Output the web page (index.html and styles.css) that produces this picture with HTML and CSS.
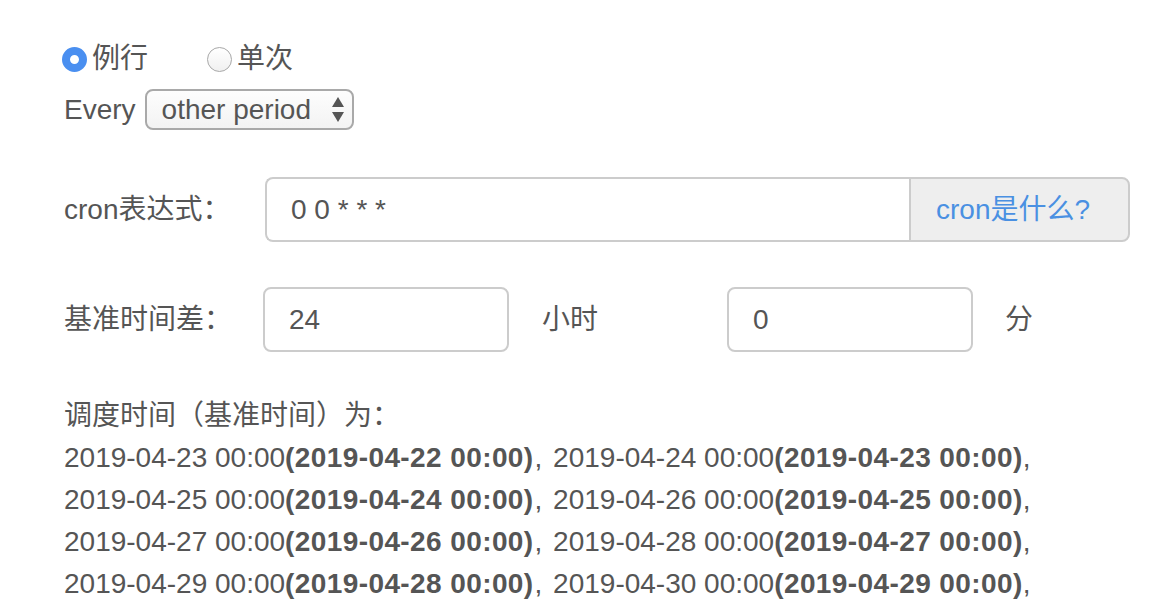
FILE: index.html
```html
<!DOCTYPE html>
<html lang="zh-CN">
<head>
    <meta charset="UTF-8">
    <title>调度配置</title>
    <link rel="stylesheet" href="styles.css">
</head>
<body>
    <div class="page">
        <div class="radio-row">
            <label class="radio-item">
                <input type="radio" name="mode" checked>
                <span>例行</span>
            </label>
            <label class="radio-item">
                <input type="radio" name="mode">
                <span>单次</span>
            </label>
        </div>

        <div class="every-row">
            <span>Every</span>
            <div class="select-wrap">
                <select>
                    <option>other period</option>
                    <option>day</option>
                    <option>hour</option>
                </select>
                <svg class="select-arrows" width="12" height="26" viewBox="0 0 12 26">
                    <path d="M6 0 L12 10 L0 10 Z" fill="#555"/>
                    <path d="M0 15 L12 15 L6 25 Z" fill="#555"/>
                </svg>
            </div>
        </div>

        <div class="form-row cron-row">
            <label class="field-label">cron表达式：</label>
            <div class="input-group">
                <input type="text" class="text-input" value="0 0 * * *">
                <a href="#" class="addon">cron是什么?</a>
            </div>
        </div>

        <div class="form-row offset-row">
            <label class="field-label">基准时间差：</label>
            <input type="text" class="text-input small" value="24">
            <span class="unit wide">小时</span>
            <input type="text" class="text-input small" value="0">
            <span class="unit">分</span>
        </div>

        <div class="schedule">
            <div>调度时间（基准时间）为：</div>
            <div>2019-04-23 00:00<b>(2019-04-22 00:00)</b><span class="sep">,</span> 2019-04-24 00:00<b>(2019-04-23 00:00)</b>,</div>
            <div>2019-04-25 00:00<b>(2019-04-24 00:00)</b><span class="sep">,</span> 2019-04-26 00:00<b>(2019-04-25 00:00)</b>,</div>
            <div>2019-04-27 00:00<b>(2019-04-26 00:00)</b><span class="sep">,</span> 2019-04-28 00:00<b>(2019-04-27 00:00)</b>,</div>
            <div>2019-04-29 00:00<b>(2019-04-28 00:00)</b><span class="sep">,</span> 2019-04-30 00:00<b>(2019-04-29 00:00)</b>,</div>
        </div>
    </div>
</body>
</html>
```

FILE: styles.css
```css
html, body {
    margin: 0;
    height: 100%;
    overflow: hidden;
    background: #fff;
}
body {
    font-family: "Liberation Sans", "Noto Sans CJK SC", sans-serif;
    font-size: 28px;
    line-height: 42px;
    color: #555;
}
.page {
    padding: 38px 20px 0 62px;
}
.radio-row {
    display: flex;
    align-items: center;
    height: 42px;
    gap: 59px;
}
.radio-item {
    display: flex;
    align-items: center;
    gap: 5px;
}
.radio-item input {
    appearance: none;
    -webkit-appearance: none;
    margin: 0;
    width: 25px;
    height: 25px;
    border-radius: 50%;
    border: 1px solid #a8a8a8;
    background: linear-gradient(#fff, #f0f0f0);
    box-sizing: border-box;
}
.radio-item input:checked {
    border: 8.5px solid #4a8ff0;
    background: #fff;
}
.every-row {
    display: flex;
    align-items: center;
    gap: 9px;
    margin-top: 9px;
    padding-left: 2px;
}
.select-wrap {
    position: relative;
}
.select-wrap select {
    appearance: none;
    -webkit-appearance: none;
    font: inherit;
    color: #555;
    width: 209px;
    height: 41px;
    padding: 0 0 0 15px;
    border: 2px solid #a9a9a9;
    border-radius: 8px;
    background: linear-gradient(#fdfdfd, #f3f3f3);
    line-height: 37px;
}
.select-arrows {
    position: absolute;
    right: 10px;
    top: 8px;
    pointer-events: none;
}
.form-row {
    display: flex;
    align-items: center;
    padding-left: 2px;
    margin-top: 45px;
}
.cron-row {
    margin-top: 46px;
}
.field-label {
    width: 201px;
    flex-shrink: 0;
}
.offset-row .field-label {
    width: 199px;
}
.text-input {
    font: inherit;
    color: #555;
    height: 65px;
    box-sizing: border-box;
    border: 2px solid #ccc;
    border-radius: 8px;
    padding: 0 24px;
    background: #fff;
    outline: none;
}
.text-input.small {
    width: 246px;
}
.input-group {
    display: flex;
    width: 865px;
}
.input-group .text-input {
    flex: 1;
    min-width: 0;
    border-radius: 8px 0 0 8px;
    border-right: none;
}
.addon {
    width: 221px;
    height: 65px;
    box-sizing: border-box;
    display: flex;
    align-items: center;
    padding-left: 25px;
    background: #eee;
    border: 2px solid #ccc;
    border-radius: 0 8px 8px 0;
    color: #4a90e2;
    text-decoration: none;
}
.unit {
    padding-left: 32px;
}
.unit.wide {
    width: 218px;
    padding-left: 33px;
    box-sizing: border-box;
}
.schedule {
    margin-top: 43px;
    padding-left: 2px;
}
.schedule b {
    font-weight: bold;
    letter-spacing: 0.4px;
}
.schedule .sep {
    margin: 0 3px 0 1px;
}
```
